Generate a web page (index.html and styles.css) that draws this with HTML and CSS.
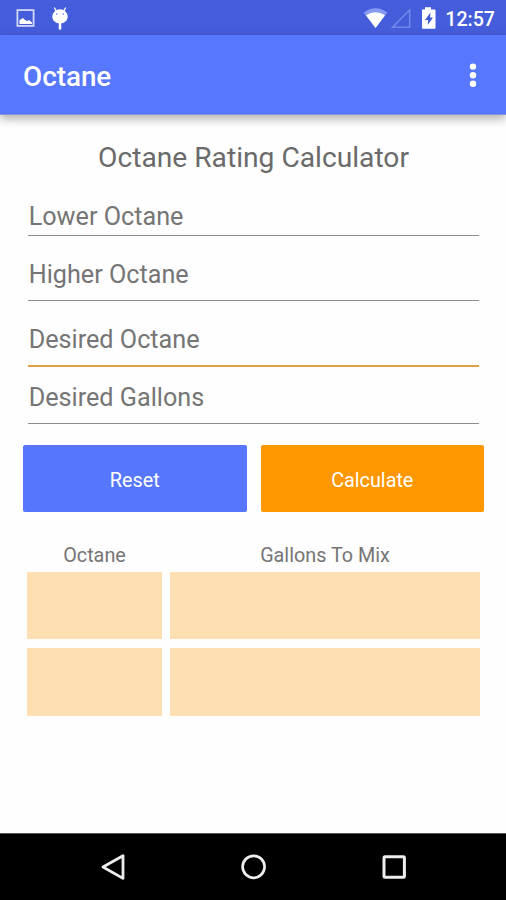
FILE: index.html
```html
<!DOCTYPE html>
<html lang="en">
<head>
<meta charset="utf-8">
<title>Octane</title>
<link rel="stylesheet" href="styles.css">
</head>
<body>
<div class="screen">
  <div class="status">
    <svg width="60" height="35" viewBox="0 0 60 35">
      <rect x="1.4" y="10.1" width="16.2" height="15.8" fill="none" stroke="#d2d8fa" stroke-width="1.8"/>
      <path d="M3.5 24V20L7 18L9 20L11.5 21L13 20L16 22.5V24Z" fill="#fff"/>
      <path d="M38.5 8L40 10.5M49.5 8L48 10.5" stroke="#fff" stroke-width="1.4" stroke-linecap="round"/>
      <path d="M36.3 16.5a7.7 7.2 0 0 1 15.4 0c0 4-3.3 7-7.7 7s-7.7-3-7.7-7z" fill="#fff"/>
      <path d="M44 22V28.5" stroke="#fff" stroke-width="2.5" stroke-linecap="round"/>
      <circle cx="40.8" cy="14.1" r=".8" fill="#6b80e3"/><circle cx="47.2" cy="14.1" r=".8" fill="#6b80e3"/>
    </svg>
    <div class="status-right">
      <svg width="76" height="35" viewBox="0 0 76 35">
        <path d="M0.5 12.5Q12.5 4 24.5 12.5L12.5 28Z" fill="#869af3"/>
        <path d="M3 15.2Q12.5 9.2 22 15.2L12.5 28Z" fill="#fff"/>
        <path d="M29.5 27.2L46.7 10V27.2Z" fill="none" stroke="#7186ea" stroke-width="1.6"/>
        <path d="M59 9.5H62V7.3H68V9.5H71.5Q72.5 9.5 72.5 10.5V27.5Q72.5 28.7 71.5 28.7H60Q59 28.7 59 27.5Z" fill="#fff"/>
        <path d="M67.5 12.5L62 20H65.2L64.7 25L70 17.5H67Z" fill="#4058d4"/>
      </svg>
      <span class="clock">12:57</span>
    </div>
  </div>
  <header class="appbar">
    <h1 class="app-title">Octane</h1>
    <svg width="10" height="30" viewBox="0 0 10 30" fill="#fff">
      <circle cx="5" cy="6.6" r="3.2"/><circle cx="5" cy="15.2" r="3.2"/><circle cx="5" cy="23.8" r="3.2"/>
    </svg>
  </header>
  <main class="content">
    <h2 class="heading">Octane Rating Calculator</h2>
    <div class="field first">Lower Octane</div>
    <div class="field tall">Higher Octane</div>
    <div class="field active">Desired Octane</div>
    <div class="field last">Desired Gallons</div>
    <div class="buttons">
      <button class="btn reset">Reset</button>
      <button class="btn calculate">Calculate</button>
    </div>
    <div class="results">
      <div class="label">Octane</div>
      <div class="label">Gallons To Mix</div>
      <div class="cell"></div><div class="cell"></div>
      <div class="cell second"></div><div class="cell second"></div>
    </div>
  </main>
  <nav class="navbar">
    <svg width="28" height="30" viewBox="0 0 28 30"><path d="M4 15L24 3.7V26.4Z" fill="none" stroke="#eee" stroke-width="2.8" stroke-linejoin="round"/></svg>
    <svg width="28" height="30" viewBox="0 0 28 30"><circle cx="13.6" cy="14.8" r="11" fill="none" stroke="#eee" stroke-width="2.7"/></svg>
    <svg width="28" height="30" viewBox="0 0 28 30"><rect x="4" y="4.8" width="20.4" height="20.4" rx="1" fill="none" stroke="#eee" stroke-width="3"/></svg>
  </nav>
</div>
</body>
</html>
```
FILE: styles.css
```css
* { box-sizing: border-box; }
body { margin: 0; background: #fefefe; font-family: Roboto, sans-serif; color: #757575; }
h1, h2 { margin: 0; }
svg { display: block; flex: none; }
.screen { display: flex; flex-direction: column; width: 506px; height: 900px; overflow: hidden; }
.status { display: flex; justify-content: space-between; height: 35px; padding: 0 11px 0 16px; background: #455dda; }
.status-right { display: flex; }
.clock { width: 56px; text-align: right; font-size: 19.6px; font-weight: 500; line-height: 40px; color: #fff; white-space: nowrap; }
.appbar { display: flex; align-items: center; justify-content: space-between; height: 80px; padding: 0 28px 0 23px; background: #5677fe; border-bottom: 1px solid #8294df; box-shadow: 0 4px 9px rgba(0, 0, 0, .3); }
.app-title { font-size: 27.8px; font-weight: 500; line-height: 36px; padding-top: 4px; color: #fff; }
.content { flex: 1; padding: 24px 22px 0 23px; }
.heading { height: 37px; text-align: center; font-size: 28.2px; font-weight: 400; line-height: 38px; color: #6a6a6a; }
.field { margin: 0 5px; padding-left: .7px; border-bottom: 1.6px solid #8b8d8b; font-size: 25.2px; line-height: 30px; white-space: nowrap; }
.first { height: 60px; padding-top: 26px; }
.tall { height: 65px; padding-top: 24px; }
.active { height: 66px; padding-top: 24px; border-bottom: 2px solid #dda149; }
.last { height: 57px; padding-top: 16px; }
.buttons { display: grid; grid-template-columns: 1fr 1fr; gap: 14px; margin-top: 21px; }
.btn { height: 67px; padding: 5px 0 0; border: 0; border-radius: 2px; font: 400 19.8px/24px Roboto, sans-serif; color: #fff; }
.reset { background: #5677fd; }
.calculate { background: #ff9800; }
.results { display: grid; grid-template-columns: 135px 310px; grid-template-rows: 32px 67px 77px; column-gap: 8px; margin: 28px 0 0 4px; }
.label { text-align: center; font-size: 19.8px; line-height: 32px; }
.cell { background: #fedfb2; }
.second { margin-top: 9px; }
.navbar { display: flex; justify-content: space-between; align-items: center; height: 67px; padding: 0 98px 0 99px; background: #000; border-top: 1px solid #555; }
```
